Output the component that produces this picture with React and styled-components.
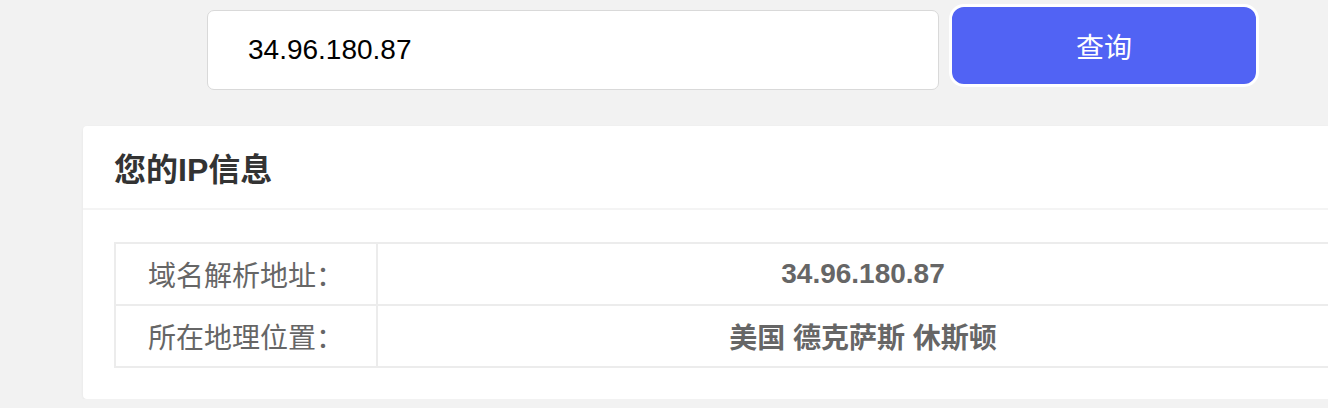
import React from 'react';
import styled, { createGlobalStyle } from 'styled-components';

const GlobalStyle = createGlobalStyle`
  html, body {
    margin: 0;
    padding: 0;
    background: #f2f2f2;
    overflow: hidden;
  }
  body {
    font-family: "Liberation Sans", "Noto Sans CJK SC", sans-serif;
  }
`;

const Page = styled.div`
  width: 1400px;
  padding-top: 4px;
`;

const SearchRow = styled.form`
  display: flex;
  align-items: flex-start;
  gap: 10px;
  padding-left: 207px;
`;

const SearchInput = styled.input`
  box-sizing: border-box;
  width: 732px;
  height: 80px;
  margin-top: 6px;
  padding: 0 40px;
  border: 1px solid #d9d9d9;
  border-radius: 7px;
  background: #fff;
  color: #000;
  font-family: inherit;
  font-size: 28px;
  outline: none;
`;

const SearchButton = styled.button`
  box-sizing: border-box;
  width: 310px;
  height: 83px;
  border: 3px solid #fff;
  border-radius: 15px;
  background: #5163f4;
  color: #fff;
  font-family: inherit;
  font-size: 28px;
  cursor: pointer;
`;

const Card = styled.section`
  box-sizing: border-box;
  width: 1298px;
  margin: 36px 0 0 83px;
  background: #fff;
  border-radius: 4px;
  box-shadow: 0 1px 3px rgba(0, 0, 0, 0.06);
`;

const CardHeader = styled.h2`
  box-sizing: border-box;
  display: flex;
  align-items: center;
  height: 84px;
  margin: 0;
  padding-left: 31px;
  border-bottom: 2px solid #f4f4f4;
  color: #333;
  font-size: 32px;
  font-weight: bold;
`;

const CardBody = styled.div`
  padding: 32px 31px 31px;
`;

const InfoTable = styled.table`
  width: 100%;
  border-collapse: collapse;
  border: 2px solid #ececec;
`;

const Cell = styled.td`
  box-sizing: border-box;
  height: 62px;
  padding: 0;
  border: 2px solid #ececec;
  color: #666;
  font-size: 28px;
  text-align: center;
`;

const Label = styled(Cell)`
  width: 262px;
`;

const Value = styled(Cell)`
  font-weight: bold;
`;

const rows = [
  { label: '域名解析地址：', value: '34.96.180.87' },
  { label: '所在地理位置：', value: '美国 德克萨斯 休斯顿' },
];

export default function App() {
  return (
    <Page>
      <GlobalStyle />
      <SearchRow onSubmit={(e) => e.preventDefault()}>
        <SearchInput defaultValue="34.96.180.87" />
        <SearchButton type="submit">查询</SearchButton>
      </SearchRow>
      <Card>
        <CardHeader>您的IP信息</CardHeader>
        <CardBody>
          <InfoTable>
            <tbody>
              {rows.map((row) => (
                <tr key={row.label}>
                  <Label>{row.label}</Label>
                  <Value>{row.value}</Value>
                </tr>
              ))}
            </tbody>
          </InfoTable>
        </CardBody>
      </Card>
    </Page>
  );
}
